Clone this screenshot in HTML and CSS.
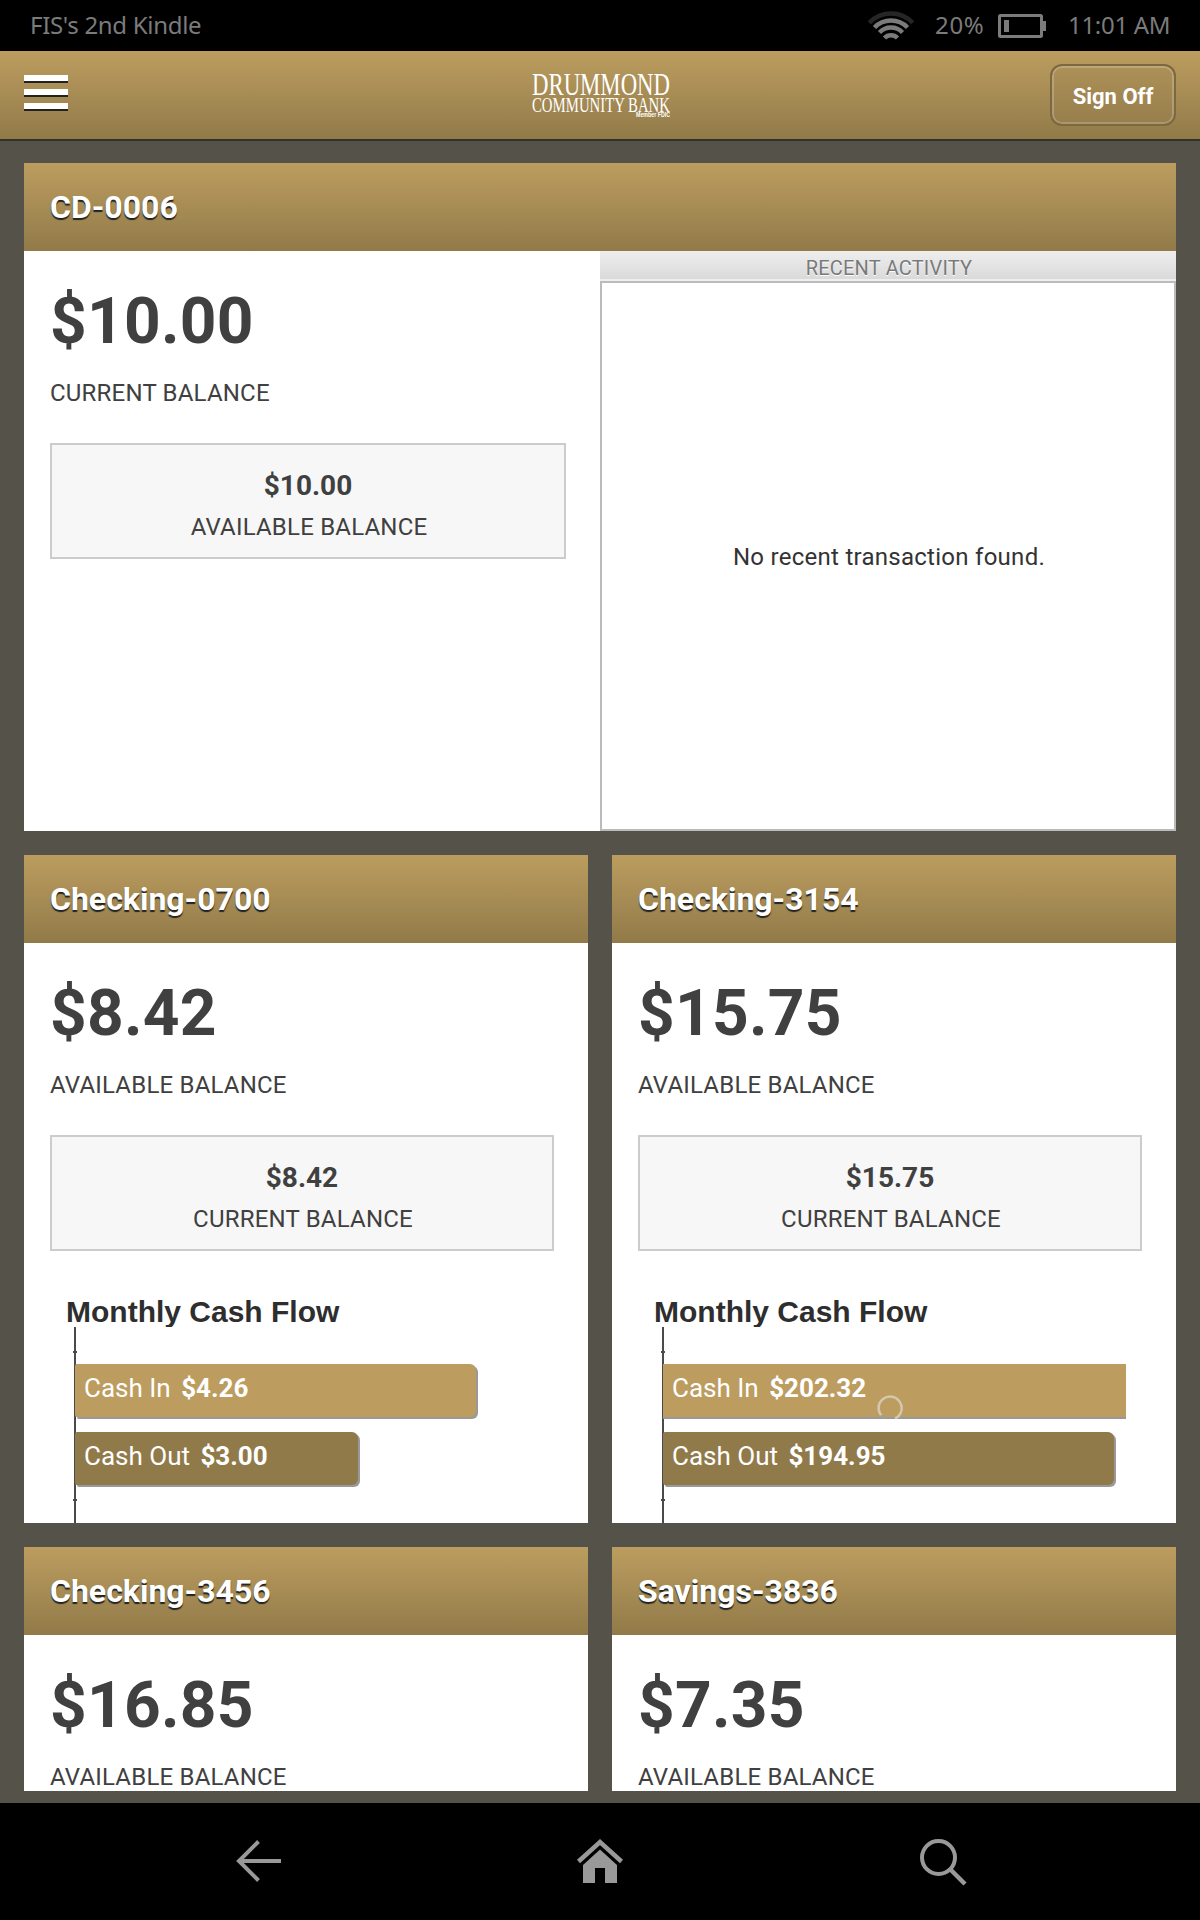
FILE: index.html
```
<!DOCTYPE html>
<html lang="en">
<head>
<meta charset="utf-8">
<title>Accounts</title>
<link rel="stylesheet" href="styles.css">
</head>
<body>
<div class="status">
  <span class="device">FIS's 2nd Kindle</span>
  <svg class="wifi" width="48" height="30" viewBox="0 0 48 30" fill="none" stroke-width="4.500">
    <path d="M2.300 11.700A30 30 0 0 1 45.700 11.700" stroke="#262626"/>
    <path d="M7.500 16.500A23 23 0 0 1 40.500 16.500M12.500 21.500A16 16 0 0 1 35.500 21.500M17.500 27A9 9 0 0 1 30.500 27" stroke="#7b7b7b"/>
  </svg>
  <span class="percent">20%</span>
  <svg class="battery" width="48" height="24" viewBox="0 0 48 24">
    <rect x="1.500" y="1.500" width="42" height="21" rx="1" fill="none" stroke="#7b7b7b" stroke-width="3"/>
    <path d="M6 6h5v12H6zM45 7h3v10h-3z" fill="#7b7b7b"/>
  </svg>
  <span class="time">11:01 AM</span>
</div>
<header class="topbar">
  <div class="menu"><i></i><i></i><i></i></div>
  <svg class="logo" width="140" height="52" viewBox="0 0 140 52">
    <text x="2" y="24" class="l1" textLength="138" lengthAdjust="spacingAndGlyphs">DRUMMOND</text>
    <text x="2" y="41" class="l2" textLength="138" lengthAdjust="spacingAndGlyphs">COMMUNITY BANK</text>
    <text x="106" y="46" class="l3" textLength="34" lengthAdjust="spacingAndGlyphs">Member FDIC</text>
  </svg>
  <span class="signoff">Sign Off</span>
</header>
<main class="accounts">
  <section class="card wide">
    <h2>CD-0006</h2>
    <div class="split">
      <div class="body">
        <div class="amount">$10.00</div>
        <div class="label">CURRENT BALANCE</div>
        <div class="box"><div class="sum">$10.00</div><div class="label">AVAILABLE BALANCE</div></div>
      </div>
      <div class="activity">
        <div class="activity-head">RECENT ACTIVITY</div>
        <div class="activity-list">No recent transaction found.</div>
      </div>
    </div>
  </section>
  <section class="card">
    <h2>Checking-0700</h2>
    <div class="body">
      <div class="amount">$8.42</div>
      <div class="label">AVAILABLE BALANCE</div>
      <div class="box"><div class="sum">$8.42</div><div class="label">CURRENT BALANCE</div></div>
      <h3>Monthly Cash Flow</h3>
      <div class="chart">
        <div class="bar in" style="width:401px"><span>Cash In</span> <b>$4.26</b></div>
        <div class="bar out" style="width:283px"><span>Cash Out</span> <b>$3.00</b></div>
      </div>
    </div>
  </section>
  <section class="card">
    <h2>Checking-3154</h2>
    <div class="body">
      <div class="amount">$15.75</div>
      <div class="label">AVAILABLE BALANCE</div>
      <div class="box"><div class="sum">$15.75</div><div class="label">CURRENT BALANCE</div></div>
      <h3>Monthly Cash Flow</h3>
      <div class="chart">
        <div class="bar in full" style="width:463px"><span>Cash In</span> <b>$202.32</b>
          <svg class="spinner" width="26" height="24" viewBox="0 0 26 24" fill="none" stroke-width="2.500"><path d="M5 21.200A11.500 11.500 0 1 1 18 23.500" stroke="#d3c7ae"/><path d="M4 20.200Q5.500 22.300 8 23.600" stroke="#a89d87"/></svg>
        </div>
        <div class="bar out" style="width:451px"><span>Cash Out</span> <b>$194.95</b></div>
      </div>
    </div>
  </section>
  <section class="card">
    <h2>Checking-3456</h2>
    <div class="body">
      <div class="amount">$16.85</div>
      <div class="label">AVAILABLE BALANCE</div>
    </div>
  </section>
  <section class="card">
    <h2>Savings-3836</h2>
    <div class="body">
      <div class="amount">$7.35</div>
      <div class="label">AVAILABLE BALANCE</div>
    </div>
  </section>
</main>
<nav class="navbar">
  <svg width="50" height="50" viewBox="0 0 50 50" fill="none" stroke="#999" stroke-width="4"><path d="M48 25H6M25.500 5.500L6 25L25.500 44.500"/></svg>
  <svg width="50" height="50" viewBox="0 0 50 50"><path d="M3.500 25.500L25 6L46.500 25.500" fill="none" stroke="#999" stroke-width="4.500"/><path d="M25 13.500L42 29V47H30V32H20V47H8V29Z" fill="#999"/></svg>
  <svg width="50" height="50" viewBox="0 0 50 50" fill="none" stroke="#999" stroke-width="4"><circle cx="21.500" cy="21.500" r="16.500"/><path d="M33 33L48 48" stroke-width="4.500"/></svg>
</nav>
</body>
</html>
```
FILE: styles.css
```
* { box-sizing: border-box; }
body { margin: 0; width: 1200px; height: 1920px; overflow: hidden; background: #55524a; color: #404040; font-family: Roboto, sans-serif; display: flex; flex-direction: column; }
h2, h3 { margin: 0; }
svg { display: block; flex: none; }

.status { height: 51px; flex: none; background: #000; color: #7b7b7b; display: flex; align-items: center; padding: 0 30px; font: 24px/49px "Noto Sans", sans-serif; }
.device { flex: 1; height: 51px; letter-spacing: -0.3px; }
.wifi { margin-right: 20px; }
.percent { width: 63px; height: 51px; letter-spacing: 0.7px; }
.battery { margin-right: 22px; }
.time { width: 102px; height: 51px; letter-spacing: -0.3px; white-space: nowrap; }

.topbar { height: 90px; flex: none; border-bottom: 2px solid #33312c; background: linear-gradient(#bc9d5f, #917a49); display: flex; justify-content: space-between; align-items: flex-start; padding: 0 24px; }
.menu { width: 126px; padding-top: 24px; display: grid; gap: 8px; }
.menu i { width: 44px; height: 6px; background: #fff; box-shadow: 0 2px 0 #222; }
.logo { margin-top: 20px; fill: #fff; overflow: visible; font-family: "Liberation Serif", serif; }
.l1 { font-size: 32px; }
.l2 { font-size: 22px; }
.l3 { font: bold 6.500px "Liberation Sans", sans-serif; }
.signoff { width: 126px; height: 62px; margin-top: 13px; border: 2px solid #7d693f; border-radius: 12px; box-shadow: inset 0 0 0 2px rgba(255,255,255,.2); background: rgba(145,122,73,.2); color: #fff; font-weight: bold; font-size: 22px; line-height: 61px; text-align: center; }

.accounts { height: 1662px; flex: none; padding: 22px 24px 0; display: grid; grid-template-columns: 564px 564px; grid-template-rows: 668px 668px 244px; gap: 24px; }
.card { background: #fff; overflow: hidden; }
.wide { grid-column: span 2; }
.card h2 { height: 88px; padding-left: 26px; background: linear-gradient(#bc9d5f, #917a49); color: #fff; font-size: 32px; line-height: 89px; text-shadow: 0 2px 1px #222; }
.split { display: grid; grid-template-columns: 576px 576px; height: 580px; }
.body { padding: 33px 34px 0 26px; }
.amount { font-weight: bold; font-size: 64px; line-height: 76px; letter-spacing: 0.25px; }
.label { margin-top: 19px; font-size: 24px; line-height: 28px; letter-spacing: 0.2px; }
.box { margin-top: 36px; height: 116px; padding-top: 25px; border: 2px solid #ccc; background: #f7f7f7; text-align: center; }
.sum { font-weight: bold; font-size: 28px; line-height: 32px; }
.box .label { margin-top: 11px; padding-left: 2px; }

.activity { display: flex; flex-direction: column; }
.activity-head { height: 30px; padding-left: 2px; border-bottom: 2px solid #eee; background: linear-gradient(#eee, #dadada); color: #7a7a7a; font-size: 20px; line-height: 35px; letter-spacing: 0.2px; text-align: center; text-shadow: 0 1px 0 #fff; }
.activity-list { flex: 1; border: 2px solid #bbb; padding: 2px 0 0 2px; display: flex; align-items: center; justify-content: center; color: #333; font-size: 24px; letter-spacing: 0.27px; }

h3 { height: 32px; margin: 44px 0 0 16px; overflow: hidden; font: bold 30px/34px "Liberation Sans", sans-serif; color: #2e2e2e; }
.chart { position: relative; height: 196px; margin-left: 24px; padding-top: 37px; border-left: 2px solid #4a4a4a; display: grid; grid-auto-rows: 53px; gap: 15px; align-content: start; }
.chart::before, .chart::after { content: ""; position: absolute; left: -3px; width: 4px; height: 2px; background: #4a4a4a; }
.chart::before { top: 24px; }
.chart::after { top: 172px; }
.bar { position: relative; margin-left: -1px; padding-left: 9px; border-radius: 2px 6px 6px 2px; box-shadow: 2px 2px 0 #999; color: #fff; font-size: 26px; line-height: 49px; white-space: nowrap; }
.bar b { margin-left: 4px; }
.in { background: #bc9d5f; }
.out { background: #917a49; }
.full { border-radius: 0; box-shadow: 0 2px 0 #999; }
.spinner { position: absolute; left: 214px; top: 31px; }

.navbar { height: 117px; flex: none; background: #000; display: flex; justify-content: space-between; padding: 33px 233px 0; }
```
